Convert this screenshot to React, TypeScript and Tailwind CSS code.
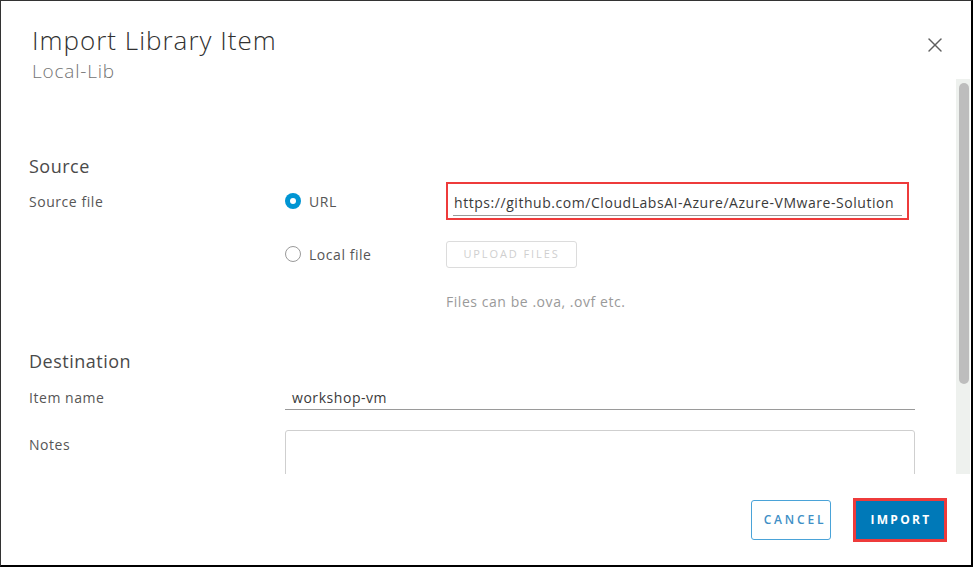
import { X } from "lucide-react";

const font = { fontFamily: "'Open Sans', Lato, sans-serif" };

export default function App() {
  return (
    <div
      className="flex h-[567px] w-[973px] flex-col overflow-hidden border-l border-t border-b-2 border-r-2 border-l-[#333] border-t-[#333] border-b-black border-r-black bg-white text-[#565656]"
      style={font}
    >
      {/* header */}
      <div className="flex h-[78px] shrink-0 items-start justify-between pl-[31px] pr-[24px] pt-[21px]">
        <div>
          <div className="text-[26px] font-light leading-[36px] tracking-[1px] text-[#313131]">Import Library Item</div>
          <div className="text-[19px] font-light leading-[26px] tracking-[0.8px] text-[#737373]">Local-Lib</div>
        </div>
        <button className="mt-[11px] text-[#5f5f5f]">
          <X className="h-[24px] w-[24px]" strokeWidth={1.4} />
        </button>
      </div>

      {/* body */}
      <div className="flex h-[395px] shrink-0">
        <div className="flex-1 overflow-hidden pl-[28px] pr-[41px] pt-[75px] text-[14px] tracking-[0.55px]">
          <div className="flex h-6 items-center text-[18px] tracking-[0.5px] text-[#4a4a4a]">Source</div>

          <div className="flex h-[46px] items-center">
            <div className="w-[256px]">Source file</div>
            <div className="flex w-[161px] items-center gap-[8px]">
              <span className="flex h-[16px] w-[16px] items-center justify-center rounded-full bg-[#0095d3]">
                <span className="h-[6px] w-[6px] rounded-full bg-white" />
              </span>
              <span>URL</span>
            </div>
            <div className="h-[38px] w-[463px] border-2 border-[#ee3b3b] px-[5px] pt-[5px]">
              <div className="flex h-[27px] items-center whitespace-nowrap border-b border-[#9a9a9a] pl-[1px] text-[#3a3a3a]">
                https://github.com/CloudLabsAI-Azure/Azure-VMware-Solution
              </div>
            </div>
          </div>

          <div className="flex h-[60px] items-center">
            <div className="w-[256px]" />
            <div className="flex w-[161px] items-center gap-[8px]">
              <span className="h-[16px] w-[16px] rounded-full border border-[#9a9a9a] bg-white" />
              <span>Local file</span>
            </div>
            <div className="flex h-[27px] w-[131px] items-center justify-center rounded-[3px] border border-[#dcdcdc] text-[11px] tracking-[1.9px] text-[#cfcfcf]">
              UPLOAD FILES
            </div>
          </div>

          <div className="flex h-[34px] items-center pl-[417px] text-[#9a9a9a]">Files can be .ova, .ovf etc.</div>

          <div className="mt-[31px] flex h-6 items-center text-[18px] tracking-[0.5px] text-[#4a4a4a]">Destination</div>

          <div className="flex h-[48px] items-center">
            <div className="w-[256px]">Item name</div>
            <div className="flex h-[26px] flex-1 items-center border-b border-[#9a9a9a] pl-[7px] pt-[1px] text-[#3a3a3a]">
              workshop-vm
            </div>
          </div>

          <div className="flex">
            <div className="w-[256px] pt-[13px]">Notes</div>
            <div className="mt-[9px] h-[80px] flex-1 rounded-[3px] border border-[#cfcfcf]" />
          </div>
        </div>

        {/* scrollbar */}
        <div className="mr-[1px] w-[14px] bg-[#eef1ee] pl-[3px] pt-[4px]">
          <div className="h-[301px] w-[10px] rounded-full bg-[#bdbdbd]" />
        </div>
      </div>

      {/* footer */}
      <div className="flex flex-1 items-start justify-end gap-[22px] pr-[24px] pt-[24px]">
        <button className="mt-[2px] h-[40px] w-[80px] rounded-[3px] border border-[#4aa3d8] pl-[8px] text-[12px] font-semibold tracking-[2.8px] text-[#3e8fc6]">
          CANCEL
        </button>
        <div className="border-[3px] border-[#ee3b3b]">
          <button className="h-[38px] w-[88px] bg-[#0079b8] pl-[2px] text-[12px] font-bold tracking-[2.3px] text-white">
            IMPORT
          </button>
        </div>
      </div>
    </div>
  );
}
